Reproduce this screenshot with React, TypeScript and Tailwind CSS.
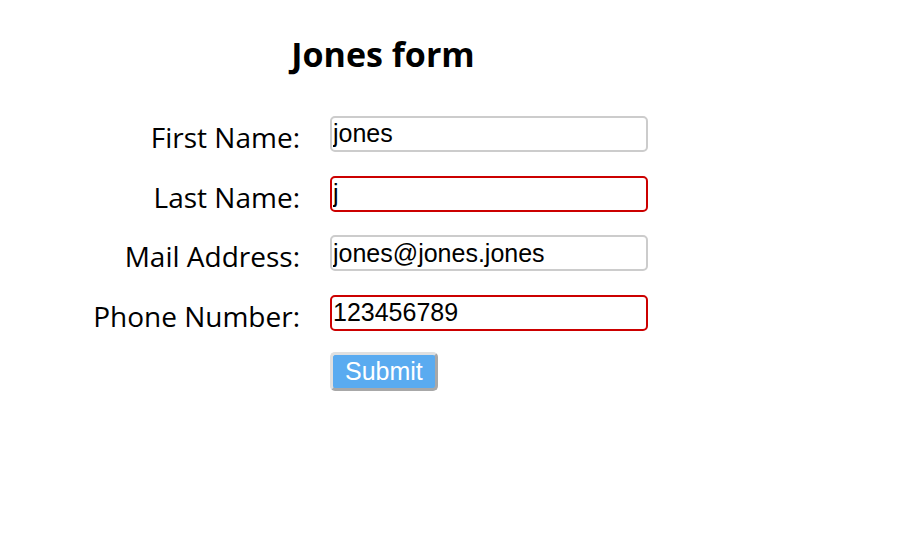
const fields = [
  { label: "First Name:", value: "jones", invalid: false },
  { label: "Last Name:", value: "j", invalid: true },
  { label: "Mail Address:", value: "jones@jones.jones", invalid: false },
  { label: "Phone Number:", value: "123456789", invalid: true },
];

export default function App() {
  return (
    <div className="min-h-[547px] w-[920px] bg-white text-black">
      <h1 className="w-[766px] pt-[31px] text-center text-[34px] font-bold font-['Open_Sans',sans-serif] leading-[46px]">
        Jones form
      </h1>
      <form className="mt-[39px] grid grid-cols-[300px_318px] gap-x-[30px] gap-y-[23.7px] items-center" onSubmit={(e) => e.preventDefault()}>
        {fields.map((f) => (
          <>
            <label key={f.label + "l"} className="h-[36px] text-right text-[28px] leading-[42px] whitespace-nowrap font-['Open_Sans',sans-serif]">
              {f.label}
            </label>
            <input
              key={f.label + "i"}
              defaultValue={f.value}
              className={`h-[36px] w-[318px] rounded-[5px] border-2 px-[1px] text-[25px] font-['Liberation_Sans',Arial,sans-serif] outline-none ${
                f.invalid ? "border-[#cc0000]" : "border-[#cccccc]"
              }`}
            />
          </>
        ))}
        <div />
        <div className="-mt-[3px]">
          <button
            type="submit"
            className="h-[39px] rounded-[5px] border-[3px] border-t-[#e0e0e0] border-l-[#e0e0e0] border-b-[#a8a8a8] border-r-[#a8a8a8] bg-[#5aabf0] px-[12px] text-[25px] leading-none text-white font-['Liberation_Sans',Arial,sans-serif]"
          >
            Submit
          </button>
        </div>
      </form>
    </div>
  );
}
